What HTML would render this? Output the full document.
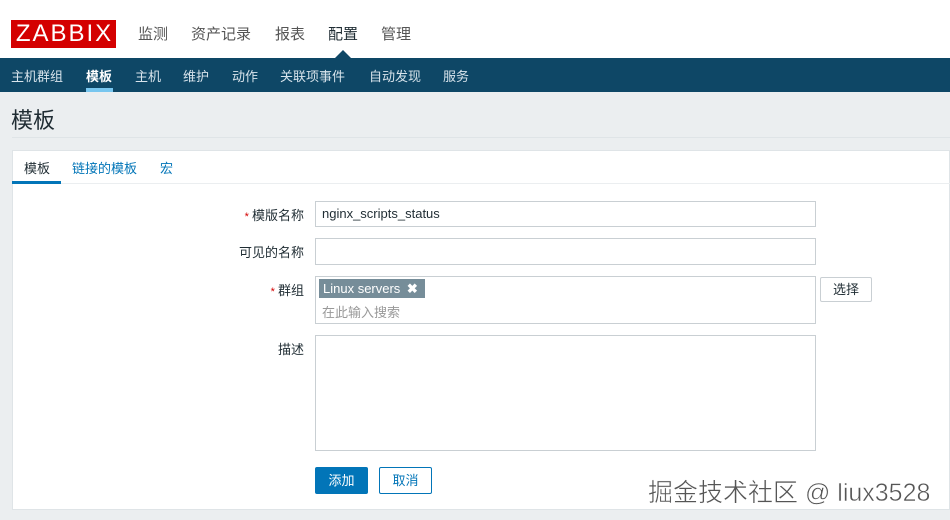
<!DOCTYPE html>
<html><head><meta charset="utf-8"><style>
*{margin:0;padding:0;box-sizing:border-box}
body{width:950px;height:520px;overflow:hidden;background:#ebeef0;font-family:"Liberation Sans","Noto Sans CJK SC",sans-serif;position:relative;color:#1f2c33}
.a{position:absolute;white-space:nowrap}
#top{position:absolute;left:0;top:0;width:950px;height:58px;background:#fff}
#logo{left:11px;top:20px;width:105px;height:28px;background:#d40000;color:#fff;font-size:24px;line-height:28px;text-align:center;letter-spacing:2px;padding-left:2px}
.nav{top:23px;font-size:15px;color:#555}
#bar{position:absolute;left:0;top:58px;width:950px;height:34px;background:#0e4766}
.sub{top:66px;font-size:13px;color:#d8e4ec}
.lbl{font-size:13px;color:#1f2c33;text-align:right;right:646px}
.inp{background:#fff;border:1px solid #c9cfd3}
.req{color:#d40000;font-size:11px}
</style></head><body>
<div id="top"></div>
<div class="a" id="logo">ZABBIX</div>
<div class="a nav" style="left:138px">监测</div>
<div class="a nav" style="left:191px">资产记录</div>
<div class="a nav" style="left:275px">报表</div>
<div class="a nav" style="left:328px;color:#1f2c33">配置</div>
<div class="a nav" style="left:381px">管理</div>
<div id="bar"></div>
<div class="a" style="left:334px;top:50px;width:0;height:0;border-left:9px solid transparent;border-right:9px solid transparent;border-bottom:9px solid #0e4766"></div>
<div class="a sub" style="left:11px">主机群组</div>
<div class="a sub" style="left:86px;color:#fff;font-weight:bold">模板</div>
<div class="a" style="left:86px;top:88px;width:27px;height:4px;background:#78c6ef"></div>
<div class="a sub" style="left:135px">主机</div>
<div class="a sub" style="left:183px">维护</div>
<div class="a sub" style="left:232px">动作</div>
<div class="a sub" style="left:280px">关联项事件</div>
<div class="a sub" style="left:369px">自动发现</div>
<div class="a sub" style="left:443px">服务</div>
<div class="a" style="left:11px;top:103px;font-size:22px;color:#1f2c33">模板</div>
<div class="a" style="left:12px;top:137px;width:938px;height:1px;background:#dfe4e7"></div>
<div class="a" style="left:12px;top:150px;width:938px;height:360px;background:#fff;border:1px solid #dfe4e7"></div>
<div class="a" style="left:12px;top:183px;width:938px;height:1px;background:#ebeef0"></div>
<div class="a" style="left:24px;top:158px;font-size:13px">模板</div>
<div class="a" style="left:72px;top:158px;font-size:13px;color:#0275b8">链接的模板</div>
<div class="a" style="left:160px;top:158px;font-size:13px;color:#0275b8">宏</div>
<div class="a" style="left:12px;top:181px;width:49px;height:3px;background:#0275b8"></div>

<div class="a lbl" style="top:205px"><span class="req">* </span>模版名称</div>
<div class="a inp" style="left:315px;top:201px;width:501px;height:26px"></div>
<div class="a" style="left:322px;top:206px;font-size:13px">nginx_scripts_status</div>
<div class="a lbl" style="top:242px">可见的名称</div>
<div class="a inp" style="left:315px;top:238px;width:501px;height:27px"></div>
<div class="a lbl" style="top:280px"><span class="req">* </span>群组</div>
<div class="a inp" style="left:315px;top:276px;width:501px;height:48px"></div>
<div class="a" style="left:319px;top:279px;width:106px;height:19px;background:#768d99;color:#fff;font-size:13px;line-height:19px;padding-left:4px">Linux servers <b style="margin-left:3px">✖</b></div>
<div class="a" style="left:322px;top:302px;font-size:13px;color:#999">在此输入搜索</div>
<div class="a" style="left:820px;top:277px;width:52px;height:25px;border:1px solid #c9cfd3;border-radius:2px;background:#fff;font-size:13px;text-align:center;line-height:23px">选择</div>
<div class="a lbl" style="top:339px">描述</div>
<div class="a inp" style="left:315px;top:335px;width:501px;height:116px"></div>
<div class="a" style="left:315px;top:467px;width:53px;height:27px;background:#0275b8;border-radius:2px;color:#fff;font-size:13px;text-align:center;line-height:27px">添加</div>
<div class="a" style="left:379px;top:467px;width:53px;height:27px;border:1px solid #0275b8;border-radius:2px;background:#fff;color:#0275b8;font-size:13px;text-align:center;line-height:25px">取消</div>
<div class="a" style="left:648px;top:473px;font-size:25px;color:#555;-webkit-text-stroke:0.5px #fff;text-shadow:0 0 2px #fff">掘金技术社区 @ liux3528</div>
</body></html>
